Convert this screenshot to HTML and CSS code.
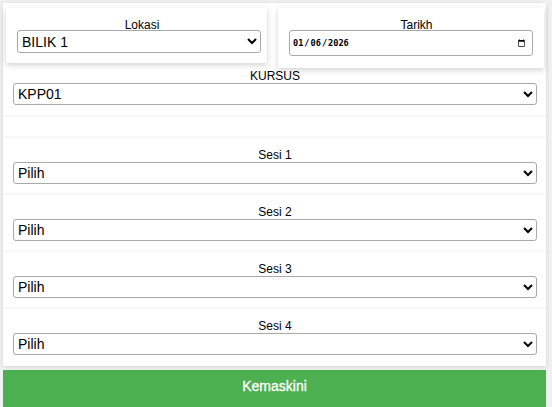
FILE: index.html
```html
<!DOCTYPE html>
<html lang="ms">
<head>
  <meta charset="utf-8"/>
  <meta name="viewport" content="width=device-width, initial-scale=1.0"/>
  <title>Kemaskini Sesi</title>
  <link rel="stylesheet" href="styles.css">
</head>
<body>
  <div class="panel">
    <div class="top-row">
      <div class="mini-card lokasi">
        <label for="lokasi">Lokasi</label>
        <select id="lokasi"><option>BILIK 1</option><option>BILIK 2</option></select>
      </div>
      <div class="mini-card tarikh">
        <label for="tarikh">Tarikh</label>
        <input type="date" id="tarikh" value="2026-01-06"/>
      </div>
    </div>

    <div class="field-row kursus">
      <label for="kursus">KURSUS</label>
      <select id="kursus"><option>KPP01</option><option>KPP02</option></select>
    </div>

    <div class="field-row spacer"></div>

    <div class="field-row">
      <label for="sesi1">Sesi 1</label>
      <select id="sesi1"><option>Pilih</option></select>
    </div>
    <div class="field-row">
      <label for="sesi2">Sesi 2</label>
      <select id="sesi2"><option>Pilih</option></select>
    </div>
    <div class="field-row">
      <label for="sesi3">Sesi 3</label>
      <select id="sesi3"><option>Pilih</option></select>
    </div>
    <div class="field-row last">
      <label for="sesi4">Sesi 4</label>
      <select id="sesi4"><option>Pilih</option></select>
    </div>
  </div>

  <button class="save-btn">Kemaskini</button>
</body>
</html>
```

FILE: styles.css
```css
body { background:#f1f1f1; color:#000; font-family:"Liberation Sans", Arial, sans-serif; margin:0; padding:3px 6px 0 3px; overflow:hidden; }

.panel { background:#fff; box-shadow:0 1px 5px rgba(0,0,0,0.12); }

.top-row { display:flex; align-items:flex-start; gap:11px; padding:5px 2px 0 3px; }
.mini-card { background:#fff; box-shadow:0 2px 6px rgba(0,0,0,0.18); padding:11px 0 10px 11px; display:flex; flex-direction:column; }
.mini-card label { font-size:12px; text-align:center; line-height:12px; margin-bottom:-1px; }
.lokasi { width:250px; }
.lokasi select { width:244px; }
.tarikh { flex:1; padding-bottom:12px; }
.tarikh input { width:244px; height:26px; box-sizing:border-box; font-family:"DejaVu Sans Mono", monospace; font-size:8.6px; font-weight:bold; border:1px solid #aaa; border-radius:3px; padding:0 4px 0 2px; color:#000; }

select { height:23px; font-family:"Liberation Sans", Arial, sans-serif; font-size:14px; color:#000; background:#fff; border:1px solid #a9a9a9; border-radius:3px; padding:0; box-sizing:border-box; }

.field-row { display:flex; flex-direction:column; padding:11px 9px 9px 10px; border-bottom:2px solid #f7f7f7; }
.field-row label { font-size:12px; text-align:center; line-height:13px; }
.field-row select { width:100%; height:22px; }
.kursus { padding-top:2px; padding-bottom:10px; }
.spacer { padding:0; height:19px; }
.last { border-bottom:none; padding-bottom:11px; }

.save-btn { display:block; width:100%; height:40px; margin-top:4px; padding:0 0 9px; background:#4CAF50; color:#fff; border:none; font-family:"Liberation Sans", Arial, sans-serif; font-size:14px; -webkit-text-stroke:0.3px #fff; cursor:pointer; }
```
